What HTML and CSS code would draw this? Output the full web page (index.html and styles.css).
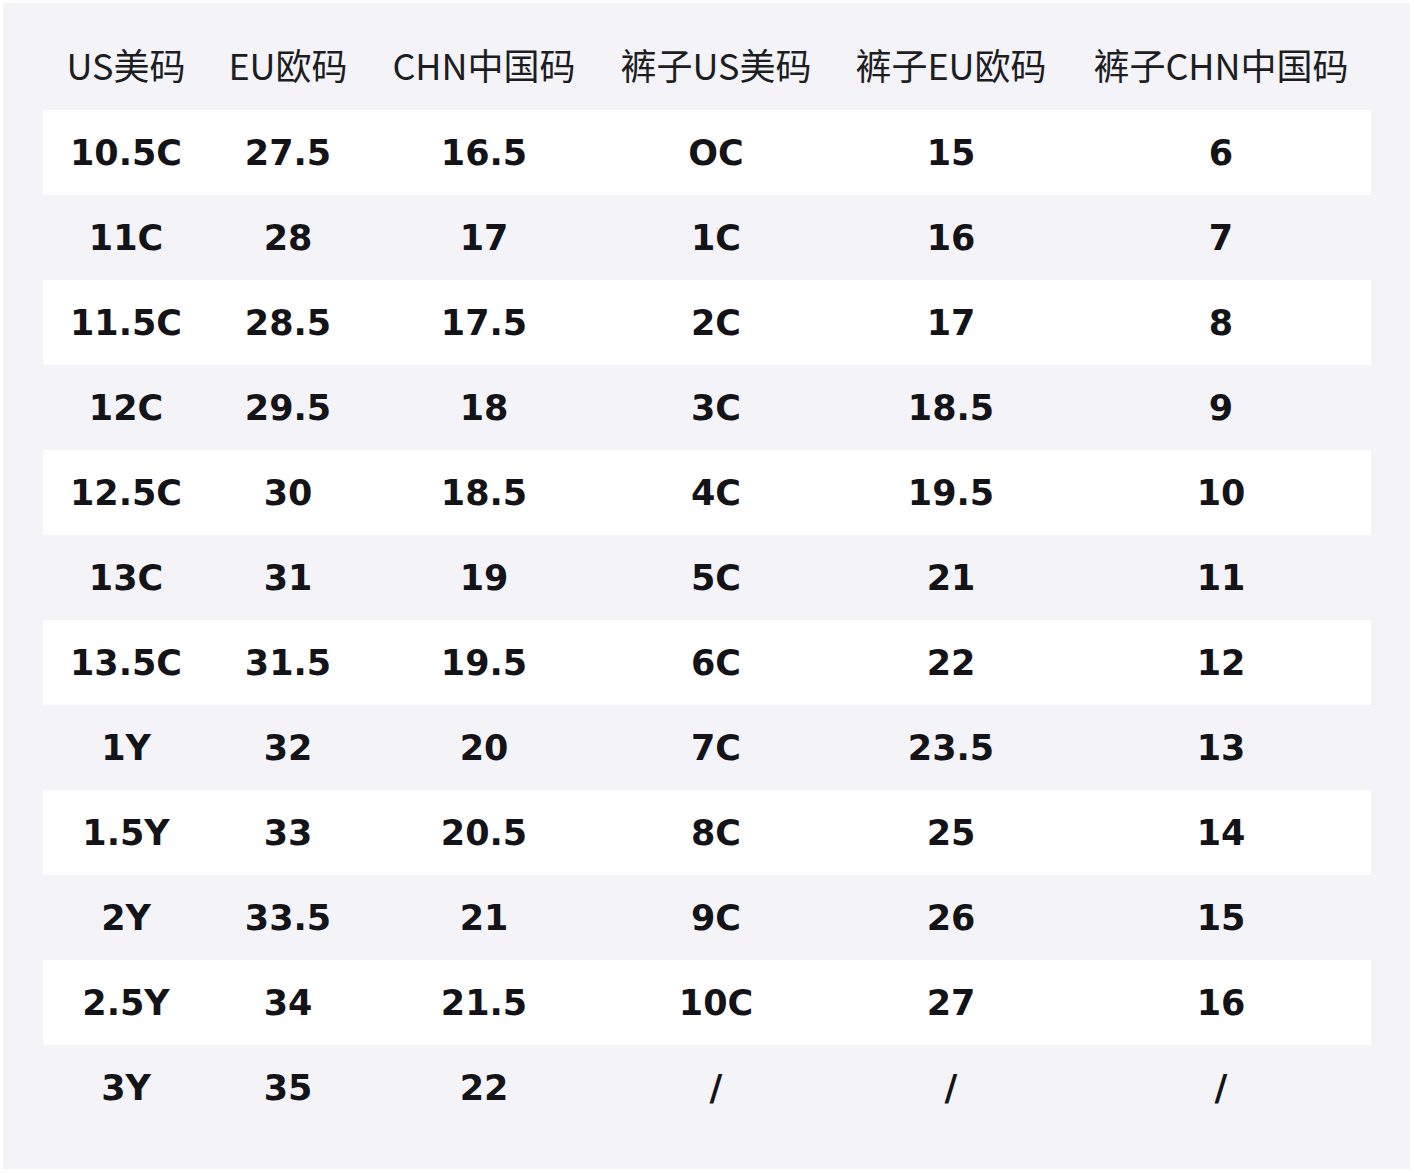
FILE: index.html
```html
<!DOCTYPE html>
<html lang="zh">
<head>
<meta charset="utf-8">
<link rel="stylesheet" href="styles.css">
</head>
<body>
<div class="panel">
  <div class="row head">
    <div>US美码</div><div>EU欧码</div><div>CHN中国码</div><div>裤子US美码</div><div>裤子EU欧码</div><div>裤子CHN中国码</div>
  </div>
  <div class="row odd"><div>10.5C</div><div>27.5</div><div>16.5</div><div>OC</div><div>15</div><div>6</div></div>
  <div class="row"><div>11C</div><div>28</div><div>17</div><div>1C</div><div>16</div><div>7</div></div>
  <div class="row odd"><div>11.5C</div><div>28.5</div><div>17.5</div><div>2C</div><div>17</div><div>8</div></div>
  <div class="row"><div>12C</div><div>29.5</div><div>18</div><div>3C</div><div>18.5</div><div>9</div></div>
  <div class="row odd"><div>12.5C</div><div>30</div><div>18.5</div><div>4C</div><div>19.5</div><div>10</div></div>
  <div class="row"><div>13C</div><div>31</div><div>19</div><div>5C</div><div>21</div><div>11</div></div>
  <div class="row odd"><div>13.5C</div><div>31.5</div><div>19.5</div><div>6C</div><div>22</div><div>12</div></div>
  <div class="row"><div>1Y</div><div>32</div><div>20</div><div>7C</div><div>23.5</div><div>13</div></div>
  <div class="row odd"><div>1.5Y</div><div>33</div><div>20.5</div><div>8C</div><div>25</div><div>14</div></div>
  <div class="row"><div>2Y</div><div>33.5</div><div>21</div><div>9C</div><div>26</div><div>15</div></div>
  <div class="row odd"><div>2.5Y</div><div>34</div><div>21.5</div><div>10C</div><div>27</div><div>16</div></div>
  <div class="row"><div>3Y</div><div>35</div><div>22</div><div>/</div><div>/</div><div>/</div></div>
</div>
</body>
</html>
```

FILE: styles.css
```css
html, body {
  margin: 0;
  padding: 0;
  background: #ffffff;
}
body {
  padding: 3px 4px 4px 3px;
}
.panel {
  background: #f3f3f8;
  padding: 40px 39px 39px 40px;
  height: 1166px;
  box-sizing: border-box;
}
.row {
  display: grid;
  grid-template-columns: 166px 158px 234px 230px 240px 1fr;
  height: 85px;
  align-items: center;
  text-align: center;
  font-family: "DejaVu Sans", "Noto Sans CJK SC", sans-serif;
  font-weight: bold;
  font-size: 35px;
  color: #131318;
}
.row.odd {
  background: #ffffff;
}
.row.head {
  height: 67px;
  align-items: start;
  line-height: 42px;
  font-family: "Noto Sans CJK SC", "Noto Sans", sans-serif;
  font-weight: normal;
  font-size: 36px;
  color: #1d1d22;
}
```
